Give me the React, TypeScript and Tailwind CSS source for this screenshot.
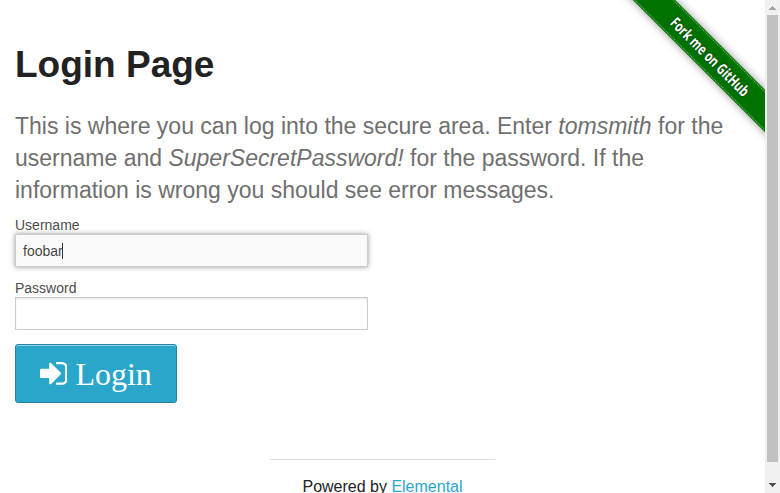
export default function App() {
  return (
    <div className="flex h-[493px] w-[780px] overflow-hidden bg-white font-['Liberation_Sans',Arial,sans-serif] text-[#222]">
      <main className="relative h-full w-[765px] overflow-hidden px-[15px] pt-[39px]">
        <h2 className="text-[37px] leading-[52px] font-bold">Login Page</h2>
        <h4 className="mt-[19px] text-[23px] leading-[32.2px] text-[#6f6f6f]">
          This is where you can log into the secure area. Enter <em>tomsmith</em> for the username and{' '}
          <em>SuperSecretPassword!</em> for the password. If the information is wrong you should see error messages.
        </h4>
        <form className="mt-[8px] flex w-[353px] flex-col items-start text-[14px] text-[#4d4d4d]">
          <label className="h-[19px] leading-[21px]">Username</label>
          <div className="flex h-[33px] w-full items-center border border-[#ccc] bg-[#fafafa] px-[7px] pt-px text-[rgba(0,0,0,0.75)] shadow-[0_0_5px_#999]">
            <span className="leading-[16px]">foobar</span>
            <span className="-ml-px h-4 w-px bg-[#333]" />
          </div>
          <label className="mt-[11px] h-[19px] leading-[21px]">Password</label>
          <div className="h-[33px] w-full border border-[#ccc] bg-white shadow-[inset_0_1px_2px_rgba(0,0,0,0.1)]" />
          <button
            type="button"
            className="mt-[14px] flex h-[59px] w-[162px] items-center rounded-[3px] border border-[#2284a1] bg-[#2ba6cb] pl-[24px] text-white shadow-[inset_0_1px_0_rgba(255,255,255,0.5)]"
          >
            <svg className="h-[22.86px] w-[27.43px]" viewBox="128 256 1536 1280" fill="currentColor">
              <path d="M1312 896q0 26-19 45l-544 544q-19 19-45 19t-45-19-19-45v-288h-448q-26 0-45-19t-19-45v-384q0-26 19-45t45-19h448v-288q0-26 19-45t45-19 45 19l544 544q19 19 19 45zm352-352v704q0 119-84.5 203.5t-203.5 84.5h-320q-13 0-22.5-9.5t-9.5-22.5q0-4-1-20t-.5-26.5 3-23.5 10-19.5 20.5-6.5h320q66 0 113-47t47-113v-704q0-66-47-113t-113-47h-312l-11.5-1-11.5-3-8-5.5-7-9-2-13.5q0-4-1-20t-.5-26.5 3-23.5 10-19.5 20.5-6.5h320q119 0 203.5 84.5t84.5 203.5z" />
            </svg>
            <span className="ml-[8px] pt-[2px] font-['Liberation_Serif',serif] text-[32px] leading-8">Login</span>
          </button>
        </form>
        <footer className="mx-auto mt-[56px] w-[225px] border-t border-[#ddd] pt-[15px] text-center text-[16px] leading-6">
          Powered by <span className="text-[#2ba6cb]">Elemental</span>
        </footer>
        <div className="absolute top-0 right-0 h-[149px] w-[149px] overflow-hidden">
          <div className="absolute top-[41px] left-[-26px] flex h-[30px] w-[240px] rotate-45 items-center justify-center bg-[#007200] shadow-[0_0_8px_rgba(0,0,0,0.4)]">
            <div className="absolute inset-x-0 inset-y-px border-y border-dotted border-[#80c080]" />
            <span className="inline-block scale-x-[0.74] font-['Open_Sans',sans-serif] text-[15px] font-bold whitespace-nowrap text-white [text-shadow:0_0_3px_rgba(0,0,0,0.6)]">
              Fork me on GitHub
            </span>
          </div>
        </div>
      </main>
      <aside className="flex h-full w-[15px] flex-col items-center bg-[#f1f1f1]">
        <svg className="h-[15px] w-[15px] shrink-0" viewBox="0 0 15 15" shapeRendering="crispEdges">
          <path d="M4 10V9h1V8h1V7h1V6h1v1h1v1h1v1h1v1z" fill="#a3a3a3" />
        </svg>
        <div className="h-[447px] w-[11px] bg-[#c1c1c1]" />
        <svg className="mt-[16px] h-[15px] w-[15px] shrink-0" viewBox="0 0 15 15" shapeRendering="crispEdges">
          <path d="M4 5v1h1v1h1v1h1v1h1V8h1V7h1V6h1V5z" fill="#505050" />
        </svg>
      </aside>
    </div>
  );
}
